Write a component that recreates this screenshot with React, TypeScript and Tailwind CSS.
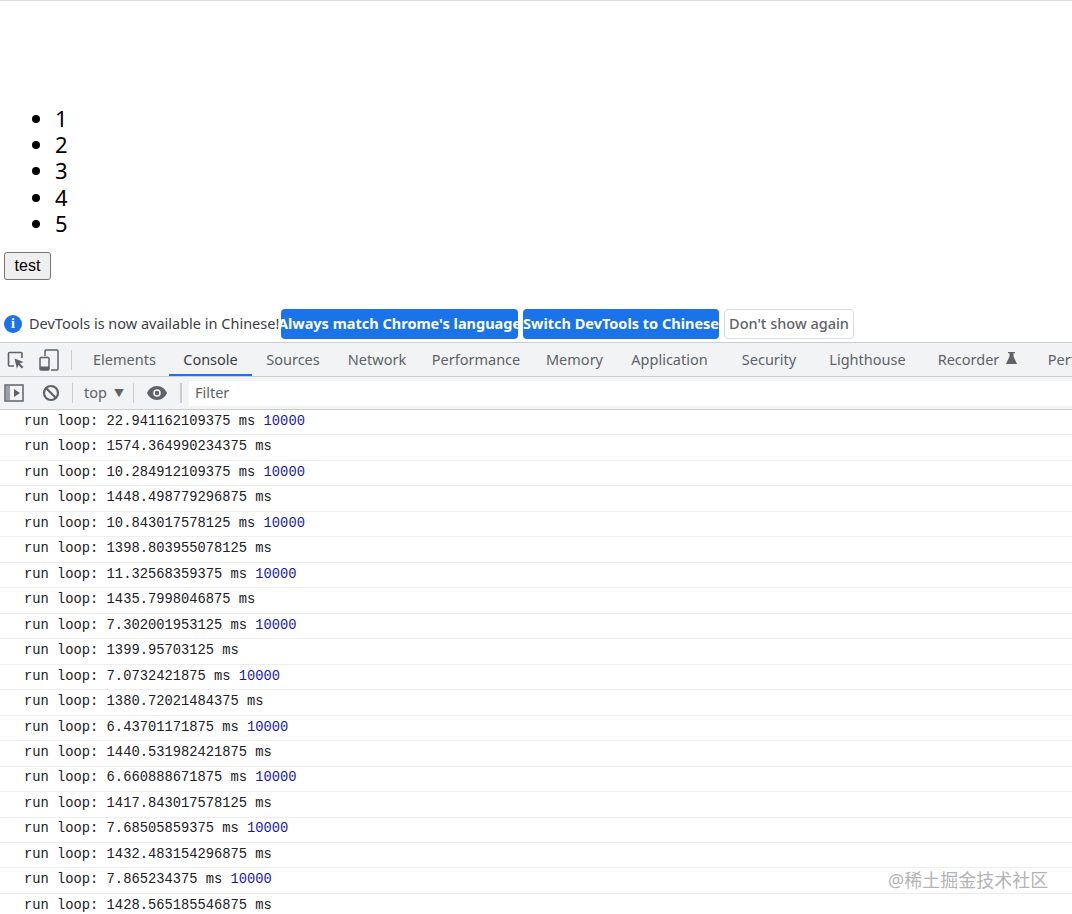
const ui = "font-['Noto_Sans','Noto_Sans_CJK_SC',sans-serif]";

const tabs = [
  { title: "Elements", width: "w-[89px]" },
  { title: "Console", width: "w-[83px]", active: true },
  { title: "Sources", width: "w-[82px]" },
  { title: "Network", width: "w-[86px]" },
  { title: "Performance", width: "w-[112px]" },
  { title: "Memory", width: "w-[85px]" },
  { title: "Application", width: "w-[105px]" },
  { title: "Security", width: "w-[94px]" },
  { title: "Lighthouse", width: "w-[103px]" },
  { title: "Recorder", width: "w-[117px]", flask: true },
  { title: "Performance", width: "w-[112px]" },
];

const logs: [string, number | null][] = [
  ["22.941162109375", 10000],
  ["1574.364990234375", null],
  ["10.284912109375", 10000],
  ["1448.498779296875", null],
  ["10.843017578125", 10000],
  ["1398.803955078125", null],
  ["11.32568359375", 10000],
  ["1435.7998046875", null],
  ["7.302001953125", 10000],
  ["1399.95703125", null],
  ["7.0732421875", 10000],
  ["1380.72021484375", null],
  ["6.43701171875", 10000],
  ["1440.531982421875", null],
  ["6.660888671875", 10000],
  ["1417.843017578125", null],
  ["7.68505859375", 10000],
  ["1432.483154296875", null],
  ["7.865234375", 10000],
  ["1428.565185546875", null],
];

function InspectIcon() {
  return (
    <svg width="20" height="20" viewBox="0 0 20 20" fill="none" className="shrink-0">
      <path d="M8 16H3.5a1 1 0 0 1-1-1V3.5a1 1 0 0 1 1-1H15a1 1 0 0 1 1 1V8" stroke="#5f6368" strokeWidth="1.6" />
      <path d="M8.5 8.5l9 3.4-3.7 1.6 3.6 3.6-1.5 1.5-3.6-3.6-1.4 3.7z" fill="#5f6368" />
    </svg>
  );
}

function DeviceIcon() {
  return (
    <svg width="20" height="22" viewBox="0 0 20 22" fill="none" className="shrink-0">
      <path d="M6 7V2a1 1 0 0 1 1-1h11a1 1 0 0 1 1 1v18a1 1 0 0 1-1 1h-6" stroke="#5f6368" strokeWidth="1.5" />
      <rect x="1" y="8.5" width="9" height="12.5" rx="1" stroke="#5f6368" strokeWidth="1.5" />
      <rect x="1" y="17.5" width="9" height="3.5" fill="#5f6368" />
    </svg>
  );
}

function SidebarIcon() {
  return (
    <svg width="20" height="18" viewBox="0 0 20 18" fill="none" className="shrink-0">
      <rect x="1" y="1" width="18" height="16" stroke="#5f6368" strokeWidth="1.5" />
      <rect x="2" y="2" width="4" height="14" fill="#9aa0a6" />
      <path d="M10 5l6 4-6 4z" fill="#5f6368" />
    </svg>
  );
}

function BlockIcon() {
  return (
    <svg width="18" height="18" viewBox="0 0 18 18" fill="none" className="shrink-0">
      <circle cx="9" cy="9" r="7" stroke="#5f6368" strokeWidth="2.2" />
      <path d="M4 4l10 10" stroke="#5f6368" strokeWidth="2.2" />
    </svg>
  );
}

function EyeIcon() {
  return (
    <svg width="20" height="14" viewBox="0 0 20 14" className="shrink-0">
      <path
        fillRule="evenodd"
        d="M10 0c4.6 0 8.3 2.9 10 7-1.7 4.100-5.400 7-10 7S1.700 11.100 0 7c1.700-4.100 5.400-7 10-7zm0 3.200a3.800 3.800 0 1 0 0 7.600 3.800 3.800 0 0 0 0-7.600zm0 1.600a2.200 2.200 0 1 1 0 4.400 2.200 2.200 0 0 1 0-4.400z"
        fill="#5f6368"
      />
    </svg>
  );
}

function FlaskIcon() {
  return (
    <svg width="11" height="12" viewBox="0 0 11 12" className="ml-[7px] mb-1 shrink-0">
      <path d="M2 0h7v1.200H7.500v3.300L11 12H0l3.500-7.500V1.200H2z" fill="#5f6368" />
    </svg>
  );
}

export default function App() {
  return (
    <div className="relative h-[914px] w-[1072px] overflow-hidden bg-white">
      <div className="h-[105px] border-t border-[#dadce0]" />

      <ul className={`list-disc pl-[55px] text-[22px] leading-[26.2px] text-black ${ui}`}>
        {[1, 2, 3, 4, 5].map((n) => (
          <li key={n}>{n}</li>
        ))}
      </ul>

      <button className="ml-1 mt-[16px] block h-[28px] w-[47px] rounded-[3px] border border-[#767676] bg-[#efefef] font-['Liberation_Sans',sans-serif] text-[16px] text-black">
        test
      </button>

      <div className={`mt-[28px] flex h-[31px] items-center pl-1 ${ui}`}>
        <div className="flex h-[18px] w-[18px] shrink-0 items-center justify-center rounded-full bg-[#1a73e8] font-['Liberation_Serif',serif] text-[14px] font-bold text-white">
          i
        </div>
        <span className="ml-[7px] w-[252px] shrink-0 text-[14.5px] text-[#3c4043]">DevTools is now available in Chinese!</span>
        <div className="flex h-[30px] w-[237px] shrink-0 items-center justify-center rounded-[4px] bg-[#1a73e8] text-[14.5px] font-bold whitespace-nowrap text-white">
          Always match Chrome's language
        </div>
        <div className="ml-[5px] flex h-[30px] w-[196px] shrink-0 items-center justify-center rounded-[4px] bg-[#1a73e8] text-[14.5px] font-bold whitespace-nowrap text-white">
          Switch DevTools to Chinese
        </div>
        <div className="ml-[5px] flex h-[30px] w-[130px] shrink-0 items-center justify-center rounded-[4px] border border-[#dadce0] bg-white text-[14.5px] font-medium whitespace-nowrap text-[#5f6368]">
          Don't show again
        </div>
      </div>

      <div className={`mt-[3px] flex h-[35px] items-center border-y border-[#cbcdd1] bg-[#f1f3f4] ${ui}`}>
        <div className="ml-[6px] flex w-[74px] shrink-0 items-center">
          <InspectIcon />
          <div className="ml-[13px]">
            <DeviceIcon />
          </div>
          <div className="ml-[12px] h-5 w-px bg-[#ccc]" />
        </div>
        {tabs.map((tab, i) => (
          <div
            key={i}
            className={`flex h-full shrink-0 items-center justify-center text-[14.5px] whitespace-nowrap ${tab.width} ${
              tab.active ? "border-b-2 border-[#1a73e8] pt-[2px] text-[#3c4043]" : "text-[#5f6368]"
            }`}
          >
            {tab.title}
            {tab.flask && <FlaskIcon />}
          </div>
        ))}
      </div>

      <div className={`flex h-[33px] items-center border-b border-[#cbcdd1] bg-[#f1f3f4] ${ui}`}>
        <div className="ml-1">
          <SidebarIcon />
        </div>
        <div className="ml-[18px]">
          <BlockIcon />
        </div>
        <div className="ml-[12px] h-5 w-px bg-[#ccc]" />
        <span className="ml-[11px] text-[14.5px] text-[#5f6368]">top</span>
        <span className="ml-[7px] text-[10px] text-[#5f6368]">▼</span>
        <div className="ml-[9px] h-5 w-px bg-[#ccc]" />
        <div className="ml-[13px]">
          <EyeIcon />
        </div>
        <div className="ml-[13px] h-5 w-[2px] bg-[#ccc]" />
        <div className="ml-[7px] flex h-[25px] flex-1 items-center bg-white pl-[6px] text-[14.5px] text-[#5f6368]">Filter</div>
      </div>

      <div className="font-['Liberation_Mono',monospace] text-[13.77px] text-[#202124]">
        {logs.map(([time, count], i) => (
          <div key={i} className="flex h-[25.47px] items-center border-b border-[#eeeeee] pl-6 whitespace-pre">
            run loop: {time} ms{count !== null && <span className="text-[#1a1aa6]"> {count}</span>}
          </div>
        ))}
      </div>

      <div className={`absolute top-[868px] left-[888px] text-[18px] leading-[24px] whitespace-nowrap text-[#b4b4b4] ${ui}`}>
        @稀土掘金技术社区
      </div>
    </div>
  );
}
